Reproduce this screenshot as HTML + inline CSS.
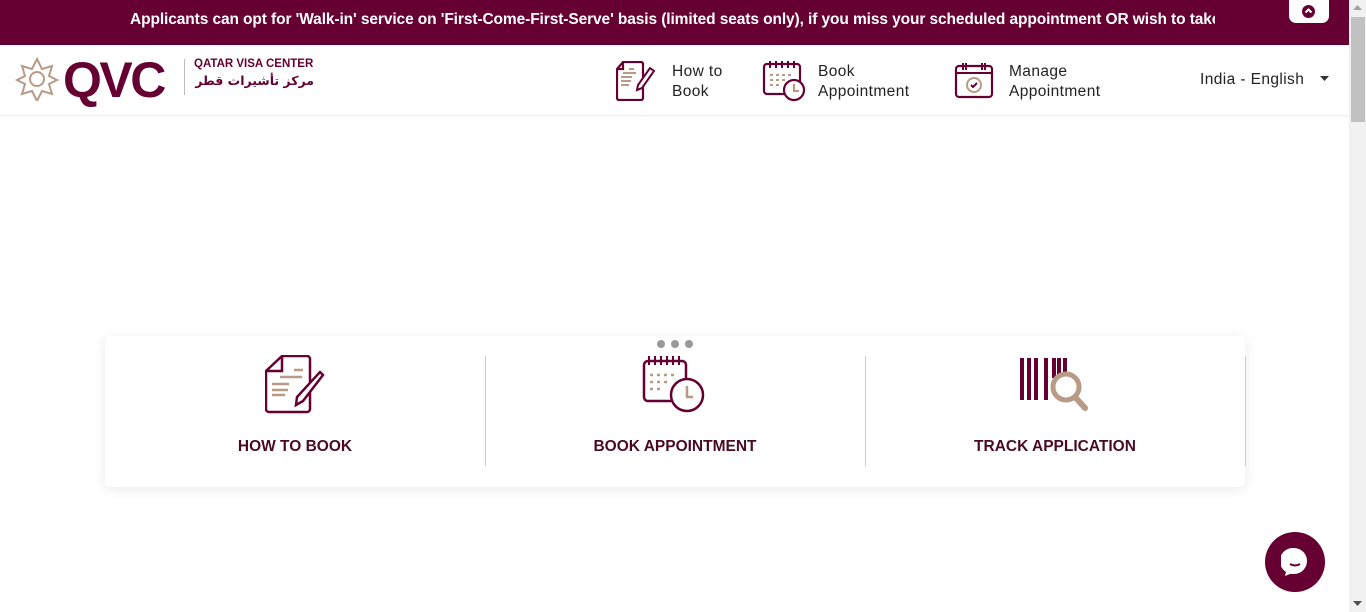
<!DOCTYPE html>
<html><head><meta charset="utf-8"><style>
*{margin:0;padding:0;box-sizing:border-box}
body{width:1366px;height:612px;overflow:hidden;background:#fff;font-family:"Liberation Sans","Noto Sans CJK SC",sans-serif;position:relative}
.banner{position:absolute;left:0;top:0;width:1349px;height:45px;background:#660033;overflow:hidden}
.banner span{position:absolute;left:130px;top:11px;color:#fff;font-weight:bold;font-size:15.5px;white-space:nowrap;letter-spacing:-0.1px;width:1085px;overflow:hidden}
.up{position:absolute;left:1289px;top:0;width:40px;height:23px;background:#fff;border-radius:0 0 7px 7px}
.up i{position:absolute;left:13px;top:5px;width:13px;height:13px;border-radius:50%;background:#660033}
.hdr{position:absolute;left:0;top:45px;width:1349px;height:71px;border-bottom:1px solid #eee;box-shadow:0 1px 3px rgba(0,0,0,.04)}
.nav{position:absolute;color:#222;font-size:15.5px;line-height:20px;letter-spacing:0.4px}
.scroll{position:absolute;left:1349px;top:0;width:17px;height:612px;background:#f1f1f1}
.thumb{position:absolute;left:1351px;top:17px;width:14px;height:105px;background:#c1c1c1}
.card{position:absolute;left:105px;top:336px;width:1140px;height:151px;background:#fff;border-radius:5px;box-shadow:0 2px 12px rgba(0,0,0,.09)}
.div{position:absolute;top:356px;width:1px;height:110px;background:#ccc}
.lbl{position:absolute;top:438px;width:380px;text-align:center;color:#4a0a25;font-size:15.5px;font-weight:bold}
.chat{position:absolute;left:1265px;top:532px;width:60px;height:60px;border-radius:50%;background:#660033}
</style></head><body>
<div class="banner"><span>Applicants can opt for 'Walk-in' service on 'First-Come-First-Serve' basis (limited seats only), if you miss your scheduled appointment OR wish to take the service</span></div>
<div class="up"><i></i><svg style="position:absolute;left:15px;top:7px" width="9" height="8" viewBox="0 0 9 8"><path d="M1.5 5.5L4.5 2.5L7.5 5.5" stroke="#fff" stroke-width="2" fill="none"/></svg></div>
<div class="hdr">
<svg style="position:absolute;left:15px;top:12px" width="44" height="44" viewBox="0 0 44 44"><g fill="none" stroke="#b89a86" stroke-width="2"><path d="M22 2l5 10 10-3-3 10 8 4-8 4 3 10-10-3-5 10-5-10-10 3 3-10-8-4 8-4-3-10 10 3z"/><circle cx="22" cy="22" r="7"/></g></svg>
<div style="position:absolute;left:63px;top:8px;color:#660033;font-weight:bold;font-size:50px;letter-spacing:-2.5px;line-height:54px">QVC</div>
<div style="position:absolute;left:184px;top:14px;width:1px;height:36px;background:#bbb"></div>
<div style="position:absolute;left:194px;top:13px;color:#660033;font-weight:bold;font-size:11.5px;white-space:nowrap">QATAR VISA CENTER</div>
<div style="position:absolute;left:194px;top:28px;width:120px;text-align:right;color:#660033;font-weight:bold;font-size:12.5px;white-space:nowrap;font-family:'DejaVu Sans',sans-serif" dir="rtl">مركز تأشيرات قطر</div>
<svg style="position:absolute;left:616px;top:16px" width="42" height="40" viewBox="0 0 42 40"><path d="M7 1h18a2 2 0 0 1 2 2v34a2 2 0 0 1-2 2H3a2 2 0 0 1-2-2V8z M1 8h6V1" fill="none" stroke="#660033" stroke-width="2.2"/><path d="M13 8h5M7 12h13M5 16h11M5 20h10M5 24h8" stroke="#b89a86" stroke-width="2"/><path d="M34 7l4 3-12 17-5 2 1-5z" fill="#fff" stroke="#660033" stroke-width="2"/></svg>
<div class="nav" style="left:672px;top:17px">How to<br>Book</div>
<svg style="position:absolute;left:762px;top:14px" width="46" height="44" viewBox="0 0 46 44"><rect x="2" y="5" width="36" height="30" rx="3" fill="none" stroke="#660033" stroke-width="2.2"/><path d="M8 2v7M14 2v7M20 2v7M26 2v7M32 2v7" stroke="#660033" stroke-width="2"/><path d="M8 16h3M14 16h3M20 16h3M26 16h3M8 21h3M14 21h3M20 21h3M8 26h3M14 26h3" stroke="#b89a86" stroke-width="2"/><circle cx="32" cy="31" r="10" fill="#fff" stroke="#660033" stroke-width="2.2"/><path d="M32 25v7h5" stroke="#b89a86" stroke-width="2" fill="none"/></svg>
<div class="nav" style="left:818px;top:17px">Book<br>Appointment</div>
<svg style="position:absolute;left:954px;top:17px" width="42" height="38" viewBox="0 0 42 38"><rect x="2" y="4" width="36" height="31" rx="3" fill="none" stroke="#660033" stroke-width="2.2"/><path d="M2 11h36M9 1v7M12 1v7M28 1v7M31 1v7" stroke="#660033" stroke-width="2"/><circle cx="20" cy="23" r="7" fill="none" stroke="#b89a86" stroke-width="2"/><path d="M17 23l2 2 4-4" stroke="#660033" stroke-width="2" fill="none"/></svg>
<div class="nav" style="left:1009px;top:17px">Manage<br>Appointment</div>
<div class="nav" style="left:1200px;top:25px">India - English</div>
<svg style="position:absolute;left:1320px;top:31px" width="9" height="5"><path d="M0 0h9L4.5 5z" fill="#333"/></svg>
</div>
<div class="card"></div>
<div class="div" style="left:485px"></div><div class="div" style="left:865px"></div><div class="div" style="left:1245px"></div>
<svg style="position:absolute;left:265px;top:355px" width="60" height="60" viewBox="0 0 60 60"><path d="M17 1h25a3 3 0 0 1 3 3v50a3 3 0 0 1-3 3H4a3 3 0 0 1-3-3V16z M1 16h16V1" fill="none" stroke="#660033" stroke-width="2.5"/><path d="M29 15h9M15 22h22M7 29h17M7 35h16M7 40h13" stroke="#b89a86" stroke-width="2.5"/><path d="M55 17l3 3-20 26-7 4 1-8z" fill="#fff" stroke="#660033" stroke-width="2.5"/></svg>
<div style="position:absolute;left:657px;top:340px;width:38px;height:9px"><i style="position:absolute;left:0;top:0;width:8px;height:8px;border-radius:50%;background:#999"></i><i style="position:absolute;left:14px;top:0;width:8px;height:8px;border-radius:50%;background:#999"></i><i style="position:absolute;left:28px;top:0;width:8px;height:8px;border-radius:50%;background:#999"></i></div>
<svg style="position:absolute;left:642px;top:355px" width="65" height="60" viewBox="0 0 65 60"><rect x="2" y="6" width="42" height="40" rx="4" fill="none" stroke="#660033" stroke-width="2.5"/><path d="M7 1v9M13 1v9M19 1v9M25 1v9M31 1v9M37 1v9" stroke="#660033" stroke-width="2"/><path d="M8 20h3M15 20h3M22 20h3M29 20h3M8 27h3M15 27h3M22 27h3M8 34h3M15 34h3" stroke="#b89a86" stroke-width="2.5"/><circle cx="45" cy="40" r="16" fill="#fff" stroke="#660033" stroke-width="2.5"/><path d="M45 31v11h6" stroke="#b89a86" stroke-width="2.5" fill="none"/></svg>
<svg style="position:absolute;left:1018px;top:356px" width="75" height="60" viewBox="0 0 75 60"><path d="M4 2v42M11 2v42M18 2v42M28 2v42M36 2v20M41 2v20M47 2v20" stroke="#660033" stroke-width="4"/><circle cx="48" cy="31" r="13" fill="#fff" stroke="#b89a86" stroke-width="5"/><path d="M57 41l10 11" stroke="#b89a86" stroke-width="6" stroke-linecap="round"/></svg>
<div class="lbl" style="left:105px">HOW TO BOOK</div>
<div class="lbl" style="left:485px">BOOK APPOINTMENT</div>
<div class="lbl" style="left:865px">TRACK APPLICATION</div>
<div class="chat"><svg style="position:absolute;left:16px;top:15px" width="30" height="30" viewBox="0 0 30 30"><path d="M13 1a13 13 0 1 1 0 26h-4l-5 2 1-4A13 13 0 0 1 13 1z" fill="#fff"/><path d="M9 17q5 3 10 0" stroke="#660033" stroke-width="2" fill="none"/></svg></div>
<div class="scroll"></div><div class="thumb"></div>
<svg style="position:absolute;left:1353px;top:5px" width="9" height="5"><path d="M0 5h9L4.5 0z" fill="#a3a3a3"/></svg>
<svg style="position:absolute;left:1353px;top:601px" width="9" height="5"><path d="M0 0h9L4.5 5z" fill="#505050"/></svg>
</body></html>
